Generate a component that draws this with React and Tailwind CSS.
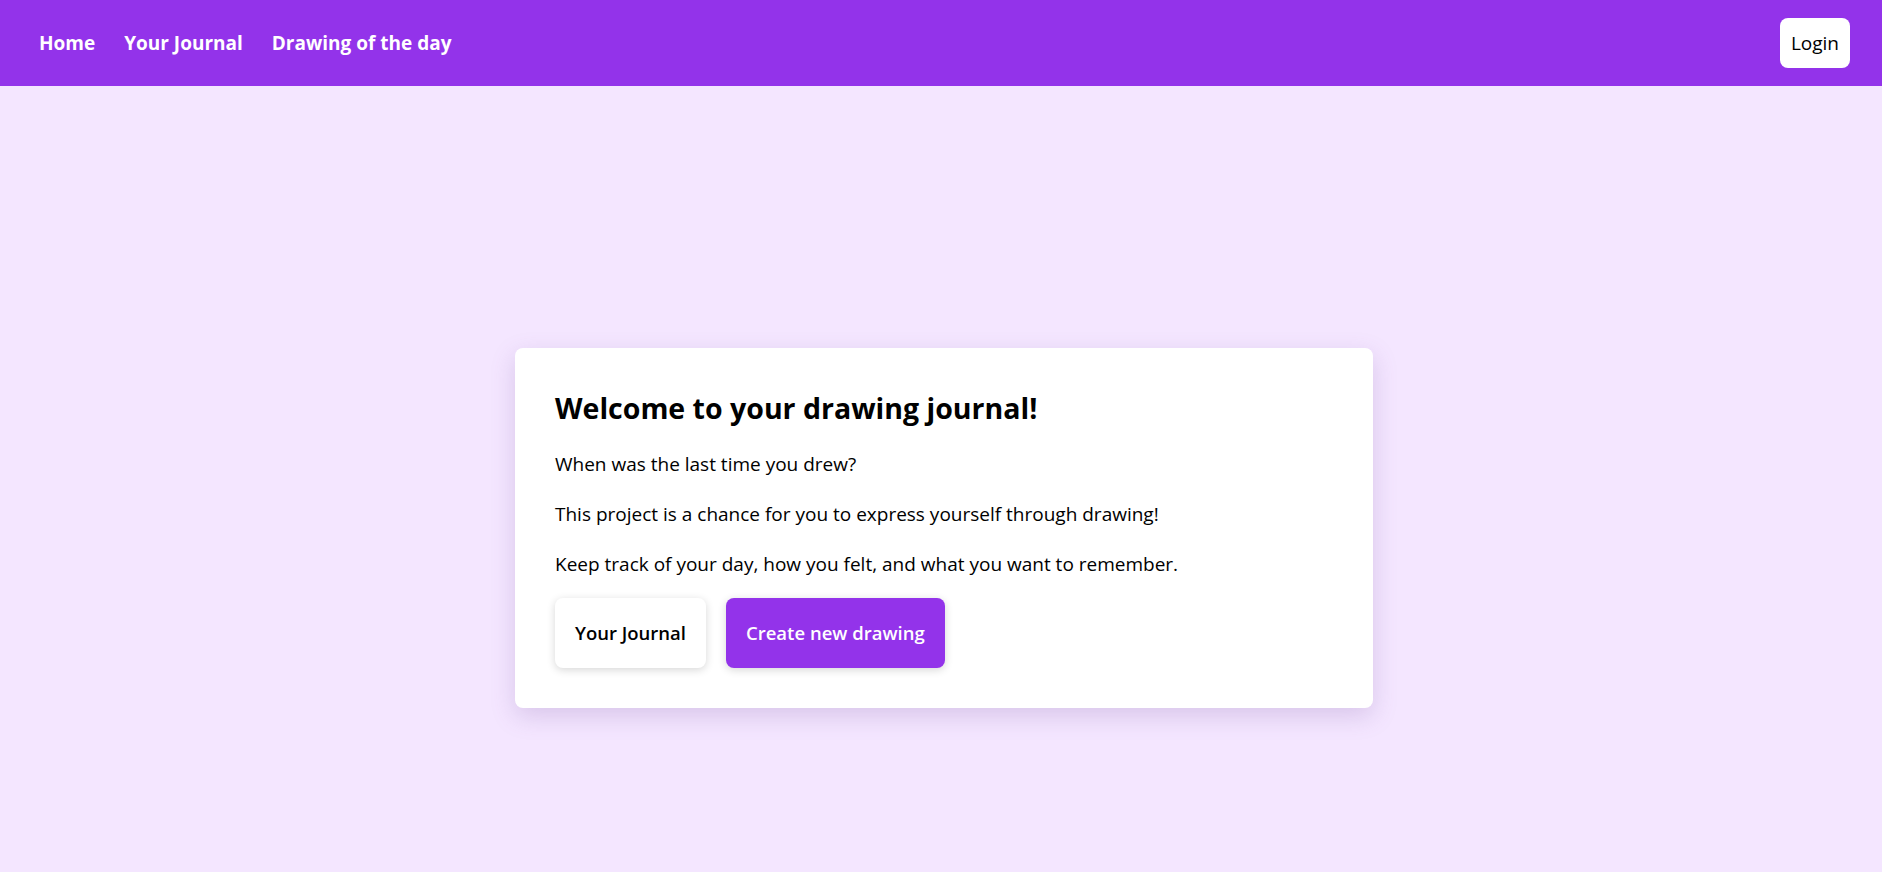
import React from 'react';

const navLinks = ['Home', 'Your Journal', 'Drawing of the day'];

const Navbar = () => (
  <nav className="h-[86px] bg-[#9333ea] flex items-center justify-between pl-[39px] pr-[32px]">
    <div className="flex items-center gap-[29px]">
      {navLinks.map((link) => (
        <a key={link} href="#" className="text-white font-bold text-[19px] leading-7">
          {link}
        </a>
      ))}
    </div>
    <button className="bg-white text-black text-[19px] leading-7 px-[11px] py-[11px] rounded-lg">
      Login
    </button>
  </nav>
);

const App = () => {
  return (
    <div className="min-h-screen bg-[#f4e6ff] font-['Open_Sans',sans-serif] text-black">
      <Navbar />

      {/* Welcome card */}
      <main className="flex justify-center pt-[262px] pb-[165px] pl-[6px]">
        <div className="w-[858px] bg-white rounded-lg p-10 shadow-[0_8px_24px_rgba(120,80,160,0.22)]">
          <h1 className="text-[28.5px] leading-9 font-bold mb-[24px] mt-[2px]">
            Welcome to your drawing journal!
          </h1>
          <div className="flex flex-col gap-[22px] text-[19px] leading-7">
            <p>When was the last time you drew?</p>
            <p>This project is a chance for you to express yourself through drawing!</p>
            <p>Keep track of your day, how you felt, and what you want to remember.</p>
          </div>
          <div className="flex gap-5 mt-5">
            <button className="bg-white text-black font-semibold text-[18.5px] leading-7 px-5 py-[21px] rounded-lg shadow-[0_2px_8px_rgba(0,0,0,0.16)]">
              Your Journal
            </button>
            <button className="bg-[#9333ea] text-white font-semibold text-[18.5px] leading-7 px-5 py-[21px] rounded-lg shadow-[0_2px_8px_rgba(0,0,0,0.16)]">
              Create new drawing
            </button>
          </div>
        </div>
      </main>
    </div>
  );
};

export default App;
